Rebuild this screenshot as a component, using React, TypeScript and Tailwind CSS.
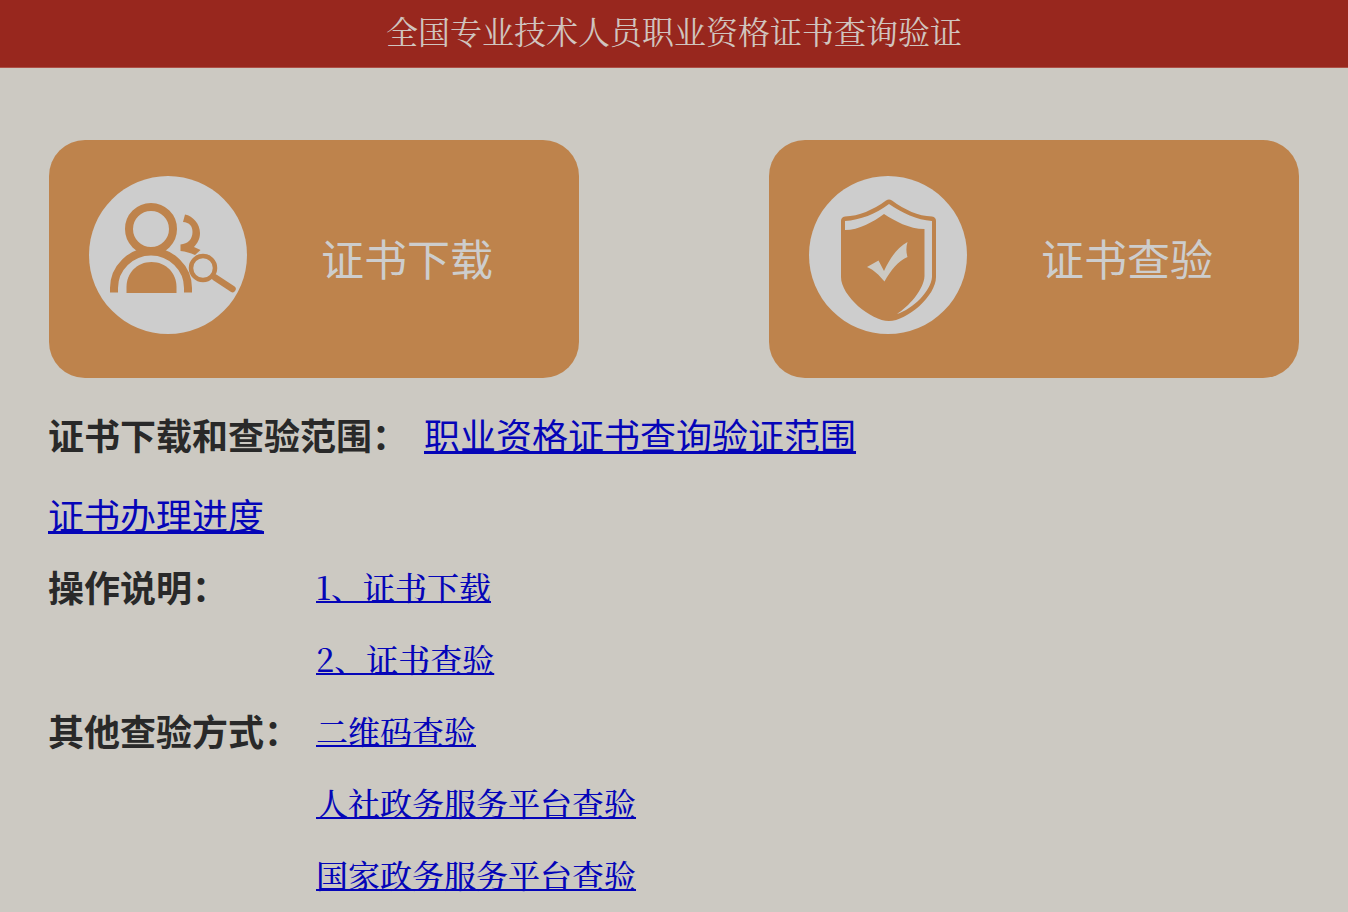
import type { ReactNode } from "react"

const steps = ["1、证书下载", "2、证书查验"]
const otherWays = ["二维码查验", "人社政务服务平台查验", "国家政务服务平台查验"]

function DownloadIcon() {
  return (
    <svg viewBox="0 0 160 160" className="w-40 h-40 shrink-0" aria-hidden="true">
      <circle cx="80" cy="80" r="79" fill="#cdcdcd" />
      <g fill="none" stroke="#be834c">
        <circle cx="63" cy="54" r="22" strokeWidth="8" />
        <path d="M26 117.500V113C26 93 43 76.500 63 76.500S100 93 100 113V117.500" strokeWidth="8" />
        <circle cx="115" cy="93" r="12" strokeWidth="4.500" />
        <path d="M127 102.500L144.500 114" strokeWidth="6.500" strokeLinecap="round" />
      </g>
      <path d="M38.500 118V112C38.500 98 49 87 63.500 87S88.500 98 88.500 112V118Z" fill="#be834c" />
      <path
        d="M97 39.500C105 41 112 49 112 58C112 64 109.500 68 106 72L112.500 75L107 80C102 78 98 76.500 92.500 76V69.500C100 69 104.500 64 104.500 57C104.500 51 101.500 47.500 95 47Z"
        fill="#be834c"
      />
    </svg>
  )
}

function VerifyIcon() {
  return (
    <svg viewBox="0 0 160 160" className="w-40 h-40 shrink-0" aria-hidden="true">
      <circle cx="80" cy="80" r="79" fill="#cdcdcd" />
      <path
        d="M78 25.500Q81 23.500 84 25.500C97 35 110 41 124 41.500Q128 42 128 46V102C128 121 99 146 81 146S33 121 33 102V46Q33 42 37 41.500C51 41 65 35 78 25.500Z"
        fill="#be834c"
      />
      <path
        d="M81 29C94 38 109 45 124 46V102C123 116 105 134 89 139C100 132 116 115 116.500 101V54C101 54 87 46 76 39C65 47 51 55 37 55V46C52 45 68 39 81 29Z"
        fill="#cdcdcd"
      />
      <path
        d="M59 92L70.500 85.500L76 96C82 83 89 73 99.500 67C98 72 98 77 99.500 82C90 86 83 95 76.500 106.500C71 100 66 95 59 92Z"
        fill="#ccc9c2"
      />
    </svg>
  )
}

function EntryCard({ icon, label }: { icon: ReactNode; label: string }) {
  return (
    <button
      type="button"
      className="flex items-center basis-[530px] min-w-0 h-[238px] pl-[39px] pb-2 rounded-[36px] bg-[#be834c] text-[#cdcdcd] cursor-pointer"
    >
      {icon}
      <span className="ml-[73px] mt-1 text-[43px] leading-none whitespace-nowrap">{label}</span>
    </button>
  )
}

function LinkGroup({ title, links }: { title: string; links: string[] }) {
  return (
    <section className="flex">
      <h2 className="w-[268px] shrink-0 text-4xl leading-[72px] font-bold">{title}</h2>
      <ul className="font-[Noto_Serif_CJK_SC,Noto_Sans_CJK_SC,serif] text-[32px] leading-[72px] font-medium">
        {links.map((link) => (
          <li key={link}>
            <a href="#" className="text-[#0505b8] underline decoration-2 underline-offset-1">
              {link}
            </a>
          </li>
        ))}
      </ul>
    </section>
  )
}

export default function App() {
  return (
    <div className="min-h-screen bg-[#ccc9c2] font-[Noto_Sans_CJK_SC,sans-serif] text-[#292929]">
      <header className="h-[68px] pb-2 flex items-center justify-center bg-[#98271e] border-b border-[#ad5047]">
        <h1 className="font-[Noto_Serif_CJK_SC,Noto_Sans_CJK_SC,serif] text-[32px] leading-none text-[#d0c4bf]">
          全国专业技术人员职业资格证书查询验证
        </h1>
      </header>

      <main className="px-12 pt-[72px]">
        <div className="flex justify-between gap-8 px-px">
          <EntryCard icon={<DownloadIcon />} label="证书下载" />
          <EntryCard icon={<VerifyIcon />} label="证书查验" />
        </div>

        <section className="flex mt-5 gap-4 text-4xl leading-[72px]">
          <h2 className="font-bold">证书下载和查验范围：</h2>
          <a href="#" className="text-[#0505b8] underline decoration-3 underline-offset-1">
            职业资格证书查询验证范围
          </a>
        </section>

        <p className="mt-2 text-4xl leading-[72px]">
          <a href="#" className="text-[#0505b8] underline decoration-3 underline-offset-1">
            证书办理进度
          </a>
        </p>

        <LinkGroup title="操作说明：" links={steps} />
        <LinkGroup title="其他查验方式：" links={otherWays} />
      </main>
    </div>
  )
}
